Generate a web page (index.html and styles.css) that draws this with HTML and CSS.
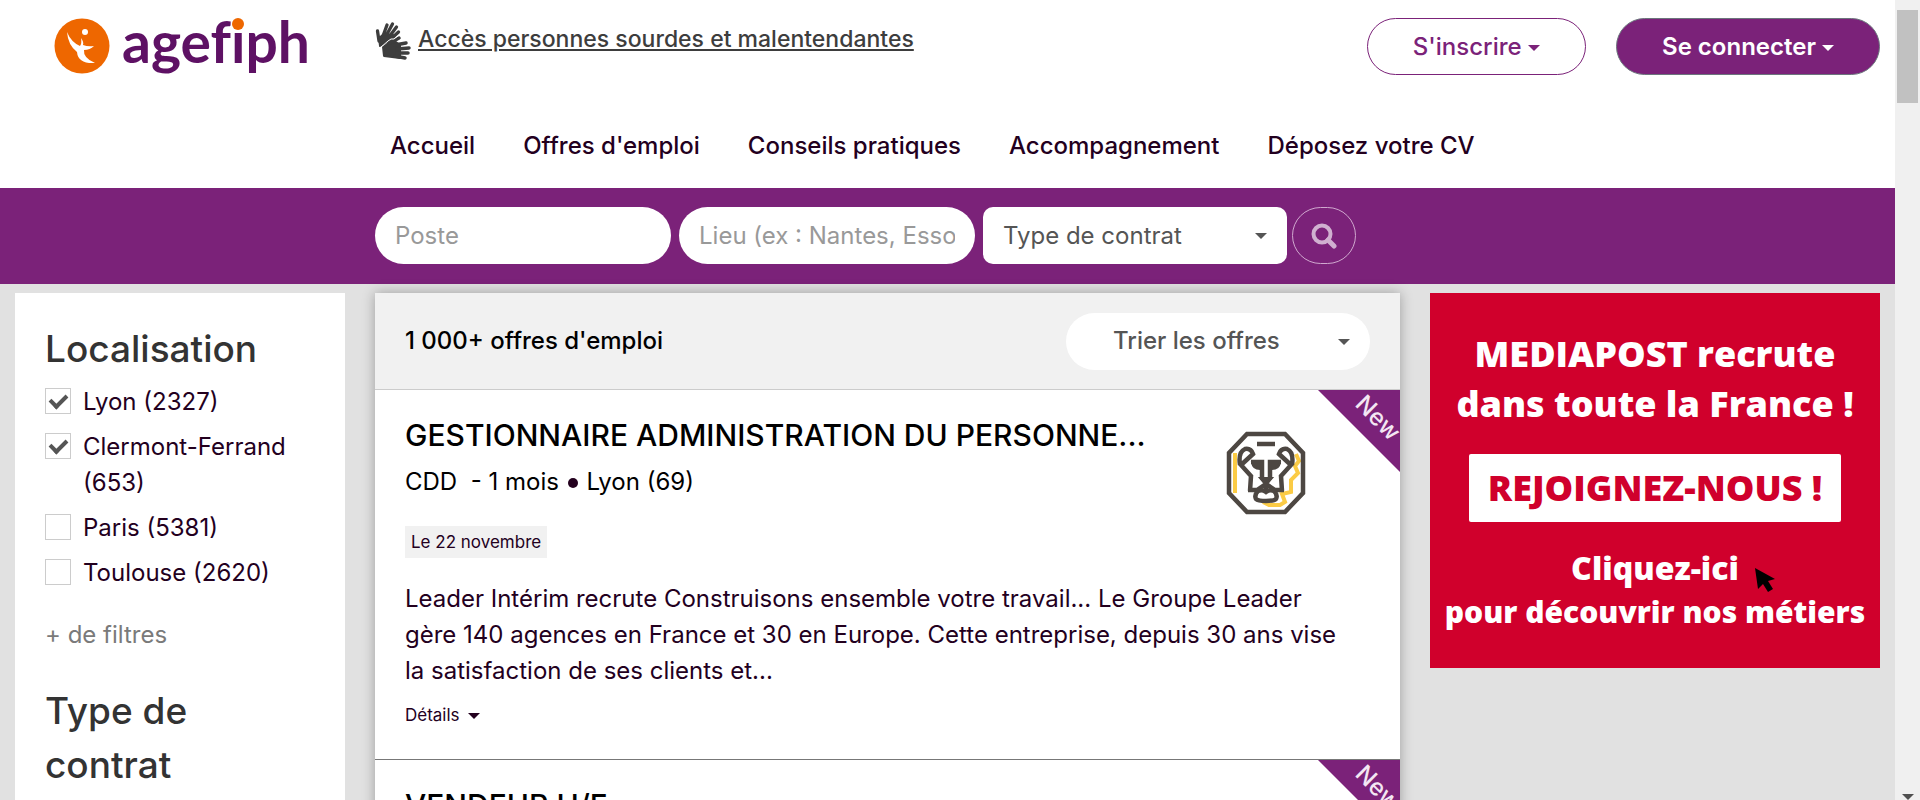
FILE: index.html
```
<!DOCTYPE html>
<html lang="fr">
<head>
    <meta charset="UTF-8">
    <meta name="viewport" content="width=device-width, initial-scale=1.0">
    <title>Offres d'emploi - Agefiph</title>
    <link rel="stylesheet" href="styles.css">
</head>
<body>
    <div class="page">
        <header class="header">
            <a href="#" class="logo" aria-label="agefiph">
                <svg width="260" height="64" viewBox="0 0 260 64">
                    <circle cx="28" cy="28" r="27.5" fill="#ee6700"/>
                    <circle cx="31" cy="14" r="3" fill="#fff"/>
                    <path d="M13 14 Q17 24 26 28 Q28 25 27 20 Q30 24 29 27 Q34 29 40 28 Q36 32 30 32 Q29 40 41 45 Q24 46 23 34 Q14 27 13 14Z" fill="#fff"/>
                    <text class="logo-text" x="68" y="45">agefiph</text>
                    <circle cx="184" cy="6" r="6" fill="#ee6700"/>
                </svg>
            </a>
            <a href="#" class="acces">
                <svg width="36" height="40" viewBox="0 0 36 40" fill="none" stroke="#3d3d3d" stroke-linecap="round" stroke-linejoin="round">
                    <path d="M2.500 10 L4 20 M8 15 L12 4 M11 15 L17.500 3 M14 16 L21.500 6 M16 18 L23.500 11" stroke-width="3.300"/>
                    <path d="M4 17 L9 13 L18 14 L14 20 L5 25Z" fill="#3d3d3d" stroke-width="2"/>
                    <path d="M8 26 L18 19 L25 24 L25 37 L9 35Z" fill="#3d3d3d" stroke-width="2"/>
                    <path d="M15 22 L24 17 M20 24 L31 22 M22 28 L34 27 M22 32 L33 32 M20 35 L30 37" stroke-width="3.500"/>
                    <path d="M5 27 L13 20 Q16 17 19 18 L24 14" stroke="#fff" stroke-width="1"/>
                </svg>
                <span>Accès personnes sourdes et malentendantes</span>
            </a>
            <div class="compte">
                <button type="button" class="btn">S'inscrire <i class="caret"></i></button>
                <button type="button" class="btn btn-plein">Se connecter <i class="caret"></i></button>
            </div>
            <nav class="menu">
                <a href="#">Accueil</a>
                <a href="#">Offres d'emploi</a>
                <a href="#">Conseils pratiques</a>
                <a href="#">Accompagnement</a>
                <a href="#">Déposez votre CV</a>
            </nav>
        </header>

        <form class="recherche">
            <input type="text" placeholder="Poste" aria-label="Poste">
            <input type="text" placeholder="Lieu (ex : Nantes, Essonne)" aria-label="Lieu">
            <div class="select select-contrat">
                <select aria-label="Type de contrat">
                    <option>Type de contrat</option>
                </select>
            </div>
            <button type="submit" aria-label="Rechercher">
                <svg width="26" height="26" viewBox="0 0 26 26" fill="none" stroke="currentColor">
                    <circle cx="11" cy="11" r="8.500" stroke-width="4"/>
                    <path d="M17 17 L23 23" stroke-width="5" stroke-linecap="round"/>
                </svg>
            </button>
        </form>

        <div class="contenu">
            <aside class="filtres">
                <h2>Localisation</h2>
                <ul>
                    <li><label><input type="checkbox" checked> <span>Lyon (2327)</span></label></li>
                    <li><label><input type="checkbox" checked> <span>Clermont-Ferrand (653)</span></label></li>
                    <li><label><input type="checkbox"> <span>Paris (5381)</span></label></li>
                    <li><label><input type="checkbox"> <span>Toulouse (2620)</span></label></li>
                </ul>
                <a href="#" class="plus">+ de filtres</a>
                <h2>Type de contrat</h2>
            </aside>

            <main class="offres">
                <div class="offres-entete">
                    <h1>1 000+ offres d'emploi</h1>
                    <div class="select select-tri">
                        <select aria-label="Trier les offres">
                            <option>Trier les offres</option>
                        </select>
                    </div>
                </div>

                <article class="offre">
                    <div class="ruban"><span>New</span></div>
                    <svg class="offre-logo" width="80" height="84" viewBox="0 0 80 84" fill="none" stroke="#4d4742" stroke-width="4.500">
                        <path d="M9 22 V62 M70 23 L73 30 L69 35 L72 42 L65 49 V61 L56 63 L59 71 L54 74 H43 L37 71" stroke="#fbcb45" stroke-width="4"/>
                        <path d="M21 3 H59 L77 22 V62 L59 81 H21 L3 62 V22Z"/>
                        <path d="M31 13 H49"/>
                        <path d="M24 60 L25 45 L15 34 L27 23 Q25 17 19 18 Q12 21 14 34 M56 60 L55 45 L65 34 L53 23 Q55 17 61 18 Q68 21 66 34"/>
                        <path d="M25 31 H36 V47 L40 52 L44 47 V31 H55 M22 59 H31 L40 53 L49 59 H58 M40 50 V59"/>
                        <path d="M26 31 H34 V38 Q27 38 26 31Z M54 31 H46 V38 Q53 38 54 31Z M34 47 H46 L40 54Z" fill="#4d4742" stroke-width="2"/>
                        <path d="M32 60 Q28 64 30 68 Q32 70 40 70 Q48 70 50 68 Q52 64 48 60 Q44 58 40 61 Q36 58 32 60Z" fill="#fff"/>
                    </svg>
                    <h3>GESTIONNAIRE ADMINISTRATION DU PERSONNE...</h3>
                    <p class="offre-infos">CDD &nbsp;- 1 mois <i class="point"></i> Lyon (69)</p>
                    <p class="offre-date"><span>Le 22 novembre</span></p>
                    <p class="offre-texte">Leader Intérim recrute Construisons ensemble votre travail... Le Groupe Leader gère 140 agences en France et 30 en Europe. Cette entreprise, depuis 30 ans vise la satisfaction de ses clients et...</p>
                    <button type="button" class="details">Détails <i class="caret"></i></button>
                </article>

                <article class="offre">
                    <div class="ruban"><span>New</span></div>
                    <h3>VENDEUR H/F</h3>
                </article>
            </main>

            <a href="#" class="pub">
                <p class="pub-titre">MEDIAPOST recrute<br>dans toute la France !</p>
                <p class="pub-bouton">REJOIGNEZ-NOUS !</p>
                <p class="pub-clic">Cliquez-ici</p>
                <p class="pub-texte">pour découvrir nos métiers</p>
                <svg class="pub-fleche" width="22" height="26" viewBox="0 0 22 26">
                    <path d="M1 1 L21 12 L14 14 L19 22 L14 25 L9 17 L4 22Z" fill="#000"/>
                </svg>
            </a>
        </div>
    </div>

    <div class="ascenseur">
        <div class="ascenseur-curseur"></div>
        <i class="caret"></i>
    </div>
</body>
</html>
```
FILE: styles.css
```
* {
    box-sizing: border-box;
}
body {
    margin: 0;
    display: flex;
    height: 100vh;
    overflow: hidden;
    font-family: Inter, Roboto, Arial, sans-serif;
    font-size: 24px;
    line-height: 36px;
    color: #23001e;
}
h1, h2, h3, p, ul {
    margin: 0;
    padding: 0;
}
a {
    color: inherit;
    text-decoration: none;
}
input, select, button {
    font: inherit;
}
button {
    cursor: pointer;
}
.page {
    flex: 1;
    min-width: 0;
    background-color: #e1e1e1;
    overflow: hidden;
}
.caret {
    display: inline-block;
    vertical-align: middle;
    border: 6px solid transparent;
    border-top-color: currentColor;
    border-bottom: 0;
}

/* En-tête */
.header {
    display: grid;
    grid-template-columns: 330px auto 1fr;
    column-gap: 30px;
    padding: 18px 15px 0;
    height: 188px;
    background-color: white;
}
.logo {
    padding-left: 39px;
}
.logo-text {
    font-family: Lato, sans-serif;
    font-size: 57px;
    font-weight: bold;
    font-variant-ligatures: none;
    fill: #5e1164;
}
.acces {
    display: flex;
    align-items: flex-start;
    gap: 7px;
    padding-top: 3px;
    color: #3d3d3d;
    font-size: 23px;
    font-weight: 500;
    text-decoration: underline;
}
.compte {
    display: flex;
    justify-content: flex-end;
    align-items: flex-start;
    gap: 30px;
}
.btn {
    height: 57px;
    padding: 0 45px;
    border: 1px solid #7b2279;
    border-radius: 29px;
    background-color: white;
    color: #7b2279;
    font-weight: 500;
}
.btn-plein {
    border-color: #6c757d;
    background-color: #7b2279;
    color: white;
    font-weight: 600;
}
.menu {
    grid-column: 2 / 4;
    display: flex;
    gap: 48px;
    padding: 12px 15px 0;
    font-weight: 500;
}

/* Recherche */
.recherche {
    display: flex;
    gap: 8px;
    height: 96px;
    padding: 19px 15px 0 375px;
    background-color: #7b2279;
}
.recherche input {
    width: 296px;
    height: 57px;
    padding: 0 20px;
    border: 0;
    border-radius: 29px;
    background-color: white;
}
.recherche input::placeholder {
    color: #999;
}
.recherche button {
    display: flex;
    align-items: center;
    justify-content: center;
    width: 64px;
    height: 57px;
    margin-left: -3px;
    padding: 0;
    border: 1px solid #d0a8cf;
    border-radius: 29px;
    background: none;
    color: #d0b0d0;
}
.select {
    position: relative;
}
.select::after {
    content: "";
    position: absolute;
    right: 20px;
    top: 26px;
    border: 6px solid transparent;
    border-top-color: #555;
    border-bottom: 0;
    pointer-events: none;
}
.select select {
    appearance: none;
    width: 304px;
    height: 57px;
    border: 0;
    background-color: white;
    color: #555;
}
.select-contrat select {
    padding: 0 20px;
    border-radius: 10px;
}
.select-tri select {
    padding: 0 47px;
    border-radius: 29px;
    font-weight: 500;
}

/* Colonnes */
.contenu {
    display: grid;
    grid-template-columns: 330px 1fr 450px;
    align-items: start;
    gap: 30px;
    padding: 9px 15px 0;
}
.filtres {
    min-height: 700px;
    padding: 29px 30px;
    background-color: white;
}
.filtres h2 {
    padding-right: 30px;
    color: #333;
    font-size: 37px;
    font-weight: 500;
    line-height: 54px;
}
.filtres ul {
    padding-top: 8px;
    list-style: none;
}
.filtres li {
    margin-bottom: 9px;
}
.filtres label {
    display: flex;
    gap: 12px;
}
.filtres input {
    appearance: none;
    flex: none;
    display: grid;
    place-items: center;
    width: 26px;
    height: 26px;
    margin: 4px 0 0;
    border: 1px solid #ccc;
    background-color: white;
}
.filtres input:checked::after {
    content: "";
    width: 13px;
    height: 7px;
    margin-bottom: 4px;
    border: solid #555;
    border-width: 0 0 4px 4px;
    transform: rotate(-45deg);
}
.plus {
    display: block;
    margin: 26px 0 31px;
    color: #7a7a7a;
}
.offres {
    background-color: white;
    box-shadow: 0 0 12px rgba(0, 0, 0, 0.3);
    color: black;
}
.offres-entete {
    display: flex;
    align-items: center;
    justify-content: space-between;
    height: 97px;
    padding: 0 30px;
    border-bottom: 1px solid #ccc;
    background-color: #f1f1f1;
}
.offres-entete h1 {
    font-size: 24px;
    font-weight: 500;
}
.offre {
    position: relative;
    padding: 26px 30px;
    border-bottom: 1px solid #777;
}
.offre h3 {
    font-size: 30px;
    font-weight: 500;
    line-height: 38px;
}
.offre-logo {
    float: right;
    margin: 15px 64px 0 0;
}
.offre-infos {
    margin-top: 10px;
}
.point {
    display: inline-block;
    width: 10px;
    height: 10px;
    margin: 0 2px;
    vertical-align: middle;
    border-radius: 50%;
    background-color: #23001e;
}
.offre-date {
    margin-top: 26px;
    font-size: 17px;
    line-height: 32px;
    color: #23001e;
}
.offre-date span {
    display: inline-block;
    padding: 0 6px;
    background-color: #f1f1f1;
}
.offre-texte {
    margin-top: 23px;
    padding-right: 15px;
    color: #23001e;
}
.details {
    display: block;
    margin-top: 8px;
    padding: 0;
    border: 0;
    background: none;
    color: #23001e;
    font-size: 17px;
}
.details .caret {
    margin-left: 4px;
}
.ruban {
    position: absolute;
    top: 0;
    right: 0;
    width: 82px;
    height: 82px;
    background-color: #7b2279;
    clip-path: polygon(0 0, 100% 0, 100% 100%);
}
.ruban span {
    position: absolute;
    top: 10px;
    right: -4px;
    color: #f3e6f3;
    font-weight: 500;
    transform: rotate(45deg);
}

/* Publicité */
.pub {
    position: relative;
    display: block;
    height: 375px;
    padding-top: 36px;
    background-color: #d0002c;
    color: white;
    font-family: "Open Sans", "Noto Sans", sans-serif;
    font-weight: 800;
    text-align: center;
    white-space: nowrap;
}
.pub-titre {
    font-size: 36px;
    line-height: 50px;
}
.pub-bouton {
    width: 372px;
    margin: 25px auto 24px;
    border-radius: 2px;
    background-color: white;
    color: #d0002c;
    font-size: 36px;
    line-height: 68px;
}
.pub-clic {
    font-size: 32px;
    line-height: 44px;
}
.pub-texte {
    font-size: 30px;
    line-height: 44px;
}
.pub-fleche {
    position: absolute;
    left: 324px;
    top: 274px;
}

/* Barre de défilement */
.ascenseur {
    display: flex;
    flex-direction: column;
    justify-content: space-between;
    align-items: center;
    width: 25px;
    padding-top: 10px;
    background-color: #f0f0f0;
    color: #505050;
}
.ascenseur-curseur {
    width: 21px;
    height: 93px;
    background-color: #c1c1c1;
}
```
